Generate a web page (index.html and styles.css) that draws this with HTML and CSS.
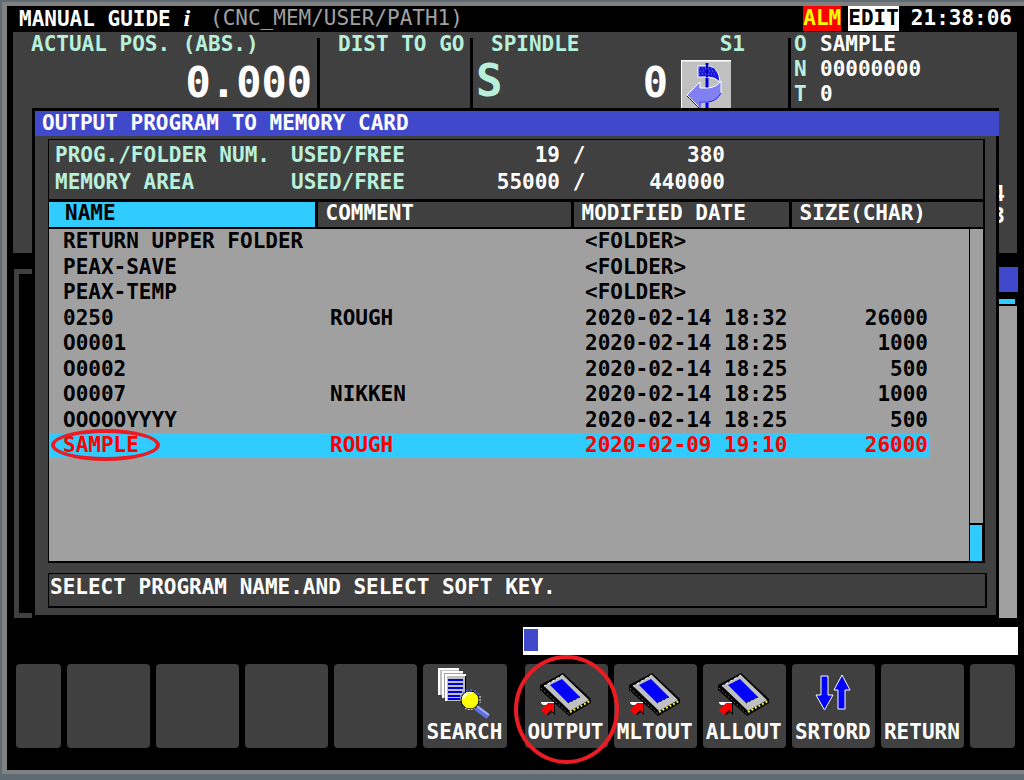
FILE: index.html
```html
<!DOCTYPE html>
<html lang="en">
<head>
<meta charset="utf-8">
<meta name="viewport" content="width=device-width, initial-scale=1">
<title>MANUAL GUIDE i</title>
<link rel="stylesheet" href="styles.css">
</head>
<body>
<svg class="sprites" aria-hidden="true">
  <symbol id="card" viewBox="0 0 54 54">
    <path d="M24 7 L52 33 V37 L30 50 L1 24 V19 Z" fill="#000"/>
    <path d="M2 22 L30 48" stroke="#707070" stroke-width="1" stroke-dasharray="2 2"/>
    <path d="M24 9 L50 34 L31 45 L5 20 Z" fill="#c0c0c0"/>
    <path d="M24 9 L5 20" stroke="#fff" stroke-width="1" stroke-dasharray="3 2"/>
    <path d="M23 13 L41 31 L29 37 L11 19 Z" fill="#00f"/>
    <path d="M41 31 L29 37" stroke="#000" stroke-width="1" stroke-dasharray="2 2"/>
    <path d="M31 46 L51 35" stroke="#ff0" stroke-width="2" stroke-dasharray="2 2"/>
    <path d="M3 36 H16 V49 L13 46 L9 49 L4 45 L8 40 Z" fill="#000"/>
    <path d="M2 36 H15 V47 L12 44 L7 49 L2 44 L7 39 Z" fill="#f00"/>
    <path d="M2 37 L4 39 H7 L9 37 H15 V36 H2 Z" fill="#fff"/>
  </symbol>
</svg>

<main class="screen">
  <header class="titlebar">
    <h1 class="product">MANUAL GUIDE <i class="product-i">i</i></h1>
    <span class="path">(CNC_MEM/USER/PATH1)</span>
    <span class="flag flag-alarm">ALM</span>
    <span class="flag flag-mode">EDIT</span>
    <time class="clock">21:38:06</time>
  </header>

  <div class="workspace">
    <div class="backdrop">
      <section class="status">
        <div class="status-cell position">
          <h2 class="caption">ACTUAL POS. (ABS.)</h2>
          <div class="readout">0.000</div>
        </div>
        <div class="status-cell distance"><h2 class="caption">DIST TO GO</h2></div>
        <div class="status-cell spindle">
          <div class="spindle-head"><h2 class="caption">SPINDLE</h2><span class="caption">S1</span></div>
          <div class="spindle-body">
            <span class="spindle-letter">S</span>
            <span class="readout">0</span>
            <svg class="spindle-icon" viewBox="0 0 50 50" aria-hidden="true">
              <rect width="50" height="50" fill="#c0c0c0"/>
              <path d="M0 50 V0.5 H50" fill="none" stroke="#fff" stroke-width="2"/>
              <path d="M26 3 V50" stroke="#00f" stroke-width="3"/>
              <path d="M17 6 H29 Q38 8 39 22 Q34 17 27 17 H17 Z" fill="#1818e0" stroke="#fff"/>
              <path d="M18 8 H34 M19 11 H36 M18 14 H36" stroke="#8080c0" stroke-dasharray="1 2"/>
              <path d="M26 4 V17 M26 20 V27" stroke="#0000a0" stroke-width="2" stroke-dasharray="4 2"/>
              <path d="M6 35 L19 22 V28 H27 Q36 27 40 21 V33 Q36 41 27 42 H19 V48 Z" fill="#8080f0" stroke="#fff"/>
              <path d="M6 36 L19 49 V42 H27 Q36 41 40 33" fill="none" stroke="#00f"/>
            </svg>
          </div>
        </div>
        <dl class="status-cell program">
          <dt class="caption">O</dt><dd>SAMPLE</dd>
          <dt class="caption">N</dt><dd>00000000</dd>
          <dt class="caption">T</dt><dd>0</dd>
        </dl>
        <div class="counts"><span>4</span><span>3</span></div>
      </section>
      <section class="editor">
        <div class="editor-frame"></div>
        <div class="editor-side">
          <div class="side-title"></div>
          <div class="side-mark"></div>
          <div class="side-track"></div>
        </div>
      </section>
    </div>

    <section class="dialog">
      <h2 class="dialog-title">OUTPUT PROGRAM TO MEMORY CARD</h2>
      <div class="dialog-body">
        <div class="panel">
          <table class="usage">
            <tbody>
              <tr><th scope="row">PROG./FOLDER NUM.</th><td class="unit">USED/FREE</td><td class="used">19</td><td class="slash">/</td><td class="free">380</td></tr>
              <tr><th scope="row">MEMORY AREA</th><td class="unit">USED/FREE</td><td class="used">55000</td><td class="slash">/</td><td class="free">440000</td></tr>
            </tbody>
          </table>
          <div class="list">
            <table class="files">
              <colgroup><col class="col-name"><col class="col-comment"><col class="col-date"><col class="col-size"><col class="col-gutter"></colgroup>
              <thead>
                <tr><th class="sorted" scope="col">NAME</th><th scope="col">COMMENT</th><th scope="col">MODIFIED DATE</th><th scope="col" colspan="2">SIZE(CHAR)</th></tr>
              </thead>
              <tbody>
                <tr><td>RETURN UPPER FOLDER</td><td></td><td>&lt;FOLDER&gt;</td><td></td></tr>
                <tr><td>PEAX-SAVE</td><td></td><td>&lt;FOLDER&gt;</td><td></td></tr>
                <tr><td>PEAX-TEMP</td><td></td><td>&lt;FOLDER&gt;</td><td></td></tr>
                <tr><td>0250</td><td>ROUGH</td><td>2020-02-14 18:32</td><td>26000</td></tr>
                <tr><td>O0001</td><td></td><td>2020-02-14 18:25</td><td>1000</td></tr>
                <tr><td>O0002</td><td></td><td>2020-02-14 18:25</td><td>500</td></tr>
                <tr><td>O0007</td><td>NIKKEN</td><td>2020-02-14 18:25</td><td>1000</td></tr>
                <tr><td>OOOOOYYYY</td><td></td><td>2020-02-14 18:25</td><td>500</td></tr>
                <tr class="selected"><td><span class="marked">SAMPLE</span></td><td>ROUGH</td><td>2020-02-09 19:10</td><td>26000</td></tr>
              </tbody>
            </table>
            <div class="scrollbar"><div class="thumb"></div></div>
          </div>
        </div>
        <p class="message">SELECT PROGRAM NAME.AND SELECT SOFT KEY.</p>
      </div>
    </section>
  </div>

  <label class="entry"><span class="cursor"></span><input class="entry-input" type="text"></label>

  <nav class="softkeys">
    <button class="key" type="button"></button>
    <button class="key" type="button"></button>
    <button class="key" type="button"></button>
    <button class="key" type="button"></button>
    <button class="key" type="button"></button>
    <button class="key" type="button">
      <svg class="key-icon" viewBox="0 0 54 54" aria-hidden="true">
        <g shape-rendering="crispEdges">
          <path d="M2 3 H22 V29 H2 Z" fill="#c0c0c0"/><path d="M2 29 V3 H22" fill="none" stroke="#fff" stroke-width="2"/>
          <path d="M6 6 H26 V32 H6 Z" fill="#a0a0a0"/><path d="M6 32 V6 H26" fill="none" stroke="#fff" stroke-width="2"/>
          <path d="M9 9 H29 V35 H9 Z" fill="#c0c0c0"/><path d="M9 35 V9 H29" fill="none" stroke="#fff" stroke-width="2"/>
          <path d="M28 10 V26" stroke="#000"/>
          <path d="M11 14 H26 M11 18 H26 M11 22 H26 M11 26 H25 M11 30 H23 M11 33 H23" stroke="#0000e0" stroke-width="2"/>
        </g>
        <path d="M39 42 L51 51" stroke="#6070e0" stroke-width="5"/><path d="M40 40 L52 49" stroke="#a0b0ff" stroke-width="2"/>
        <circle cx="33" cy="34" r="9" fill="#ff0" stroke="#000" stroke-width="1"/>
        <path d="M24 31 A10 10 0 0 1 42 29" fill="none" stroke="#4060ff" stroke-width="2" stroke-dasharray="2 2"/>
        <path d="M26 33 A7 7 0 0 1 34 27" fill="none" stroke="#fff" stroke-width="2"/>
        <path d="M43 30 V37 M28 42 A9 9 0 0 0 38 42" fill="none" stroke="#fff" stroke-dasharray="2 1"/>
      </svg>
      <span class="key-label">SEARCH</span>
    </button>
    <button class="key key-split" type="button">
      <svg class="key-icon" aria-hidden="true"><use href="#card"/></svg>
      <span class="key-label">OUTPUT</span>
      <span class="ring"></span>
    </button>
    <button class="key" type="button">
      <svg class="key-icon" aria-hidden="true"><use href="#card"/></svg>
      <span class="key-label">MLTOUT</span>
    </button>
    <button class="key" type="button">
      <svg class="key-icon" aria-hidden="true"><use href="#card"/></svg>
      <span class="key-label">ALLOUT</span>
    </button>
    <button class="key" type="button">
      <svg class="key-icon" viewBox="0 0 54 54" aria-hidden="true">
        <path d="M15 10 H22 V29 H27 L18.5 44 L10 29 H15 Z" fill="#00f" stroke="#fff"/>
        <path d="M36 9 L44 24 H39 V43 H32 V24 H28 Z" fill="#00f" stroke="#fff"/>
      </svg>
      <span class="key-label">SRTORD</span>
    </button>
    <button class="key" type="button"><span class="key-label">RETURN</span></button>
    <button class="key" type="button"></button>
  </nav>
</main>
</body>
</html>
```
FILE: styles.css
```css
:root {
  --panel: #404040;
  --list: #a0a0a0;
  --blue: #4048cc;
  --cyan: #30ccff;
  --mint: #b8f0dc;
  --ring: #ed1c24;
}

* { box-sizing: border-box; }

body {
  margin: 0;
  padding: 2px 0 6px 2px;
  background: #5f6b73;
  color: #fff;
  font: bold 21px/25px "DejaVu Sans Mono", "Liberation Mono", monospace;
}

h1, h2, p, dl, dd { margin: 0; font: inherit; }
table { border-collapse: collapse; }
th, td { padding: 0; text-align: left; font: inherit; }

.sprites { position: absolute; width: 0; height: 0; }

.screen {
  display: flex;
  flex-direction: column;
  min-height: calc(100vh - 8px);
  border: 4px solid #808080;
  border-width: 4px 0 4px 5px;
  background: #000;
}

/* Title bar */
.titlebar {
  display: flex;
  height: 26px;
  padding: 0 12px 0 12px;
  white-space: nowrap;
}
.product-i { font-family: "Liberation Serif", serif; font-size: 24px; line-height: 25px; }
.path { margin-left: 20px; color: var(--list); font-weight: normal; }
.flag { height: 25px; }
.flag-alarm { margin-left: auto; background: #f00; color: #ff0; }
.flag-mode { margin: 0 12px 0 7px; background: #fff; color: #000; }

/* Machine status and editor, with the dialog stacked above */
.workspace { display: grid; flex: 1; }
.workspace > * { grid-area: 1 / 1; min-width: 0; }
.backdrop { display: flex; flex-direction: column; padding: 0 7px 0 6px; }

.status {
  display: grid;
  grid-template-columns: 304px 153px 318px 1fr;
  align-content: start;
  height: 221px;
  background: var(--panel);
}
.status-cell { height: 76px; margin-top: 6px; margin-bottom: 0; }
.status-cell + .status-cell { border-left: 3px solid #000; }
.status-cell > :first-child { margin-top: -6px; }
.caption { color: var(--mint); white-space: nowrap; }
.position { padding: 0 5px 0 18px; }
.distance { padding-left: 18px; }
.readout { font-size: 42px; line-height: 52px; text-align: right; }
.spindle { padding-left: 3px; }
.spindle-head { display: flex; justify-content: space-between; padding: 0 43px 0 15px; }
.spindle-body { display: flex; align-items: flex-start; padding-right: 57px; }
.spindle-letter { flex: 1; color: var(--mint); font-size: 44px; line-height: 48px; }
.spindle-icon { width: 50px; height: 50px; margin: 3px 0 0 13px; }
.program {
  display: grid;
  grid-template-columns: 26px 1fr;
  grid-auto-rows: 25px;
  padding-left: 3px;
}
.program > * { margin-top: -6px; }
.counts {
  display: flex;
  flex-direction: column;
  grid-column: 1 / -1;
  align-items: flex-end;
  padding: 69px 12px 0 0;
  line-height: 22px;
}

.editor { display: flex; flex: 1; margin-top: 16px; }
.editor-frame { flex: 1; margin-left: 1px; border: 5px solid var(--panel); border-right: 0; }
.editor-side { display: flex; flex-direction: column; width: 25px; margin-top: -2px; }
.side-title { height: 25px; margin-right: -1px; background: var(--blue); }
.side-mark { height: 5px; margin: 7px 2px 2px 0; background: var(--cyan); }
.side-track { flex: 1; background: var(--list); }

/* Dialog */
.dialog {
  display: flex;
  flex-direction: column;
  margin: 76px 25px 0 25px;
  border: 3px solid #000;
  border-right: 0;
}
.dialog-title { padding-left: 7px; background: var(--blue); }
.dialog-body {
  display: flex;
  flex: 1;
  flex-direction: column;
  padding: 3px 10px 7px 13px;
  border-right: 3px solid #000;
  background: var(--panel);
}
.panel {
  display: flex;
  flex: 1;
  flex-direction: column;
  margin-right: 1px;
  border: 1px solid #000;
  border-width: 1px 2px 2px 1px;
}
.usage { margin: 2px 0 3px 6px; align-self: flex-start; }
.usage tr { height: 27px; }
.usage th { width: 236px; color: var(--mint); }
.unit { width: 129px; color: var(--mint); }
.used { width: 140px; text-align: right; }
.slash { width: 38px; text-align: center; }
.free { width: 127px; text-align: right; }

.list { display: grid; flex: 1; border-top: 3px solid #000; background: var(--list); }
.list > * { grid-area: 1 / 1; align-self: start; }
.files { width: 100%; table-layout: fixed; white-space: nowrap; color: #000; }
.col-name { width: 267px; }
.col-date { width: 218px; }
.col-size { width: 140px; }
.col-gutter { width: 53px; }
.files thead tr { background: var(--panel); color: #fff; border-bottom: 2px solid #000; }
.files th { height: 26px; padding: 0 0 3px 8px; line-height: 22px; border-right: 3px solid #000; }
.files th:last-child { border-right: 0; }
.files .sorted { padding-left: 16px; background: var(--cyan); color: #000; }
.files td { height: 25px; padding-left: 14px; }
.files tbody tr:nth-child(even) td { height: 26px; }
.files td:nth-child(3) { padding-left: 13px; }
.files td:nth-child(4) { padding: 0 2px 0 0; text-align: right; }
.selected td { background: var(--cyan); color: #f00; }
.marked { position: relative; }
.marked::after {
  content: "";
  position: absolute;
  inset: -4px -21px -4px -12px;
  border: 4px solid var(--ring);
  border-radius: 50%;
}
.list > .scrollbar {
  display: flex;
  align-self: stretch;
  align-items: flex-end;
  justify-self: end;
  width: 14px;
  margin-top: 26px;
  border-left: 1px solid #000;
}
.thumb { width: 13px; height: 38px; border-top: 2px solid #000; border-right: 1px solid #000; background: var(--cyan); }
.message { height: 35px; margin: 10px -1px 0 0; padding: 1px; border: 2px solid #000; border-width: 1px 2px 2px 1px; white-space: nowrap; }

/* Key-in line */
.entry {
  display: flex;
  align-items: flex-start;
  align-self: flex-end;
  width: calc(50% - 13px);
  height: 28px;
  margin: 9px 6px 9px 0;
  padding: 2px 1px;
  background: #fff;
}
.cursor { width: 14px; height: 22px; background: var(--blue); }
.entry-input { flex: 1; min-width: 0; height: 22px; padding: 0; border: 0; outline: 0; background: none; font: inherit; }

/* Soft keys */
.softkeys {
  display: grid;
  grid-template-columns: 45fr repeat(5, 83fr) 6px repeat(5, 83fr) 45fr;
  gap: 6px;
  padding: 0 9px 22px 9px;
}
.key {
  display: flex;
  position: relative;
  flex-direction: column;
  align-items: center;
  justify-content: flex-end;
  min-width: 0;
  height: 84px;
  padding: 0 1px 4px 0;
  border: 0;
  border-radius: 4px;
  background: var(--panel);
  color: #fff;
  font: inherit;
}
.key-split { grid-column: 8; }
.key-icon { width: 54px; height: 54px; }
.key-label { line-height: 24px; }
.ring {
  position: absolute;
  z-index: 1;
  inset: -9px -11px -16px -11px;
  border: 4px solid var(--ring);
  border-radius: 50%;
}
```
